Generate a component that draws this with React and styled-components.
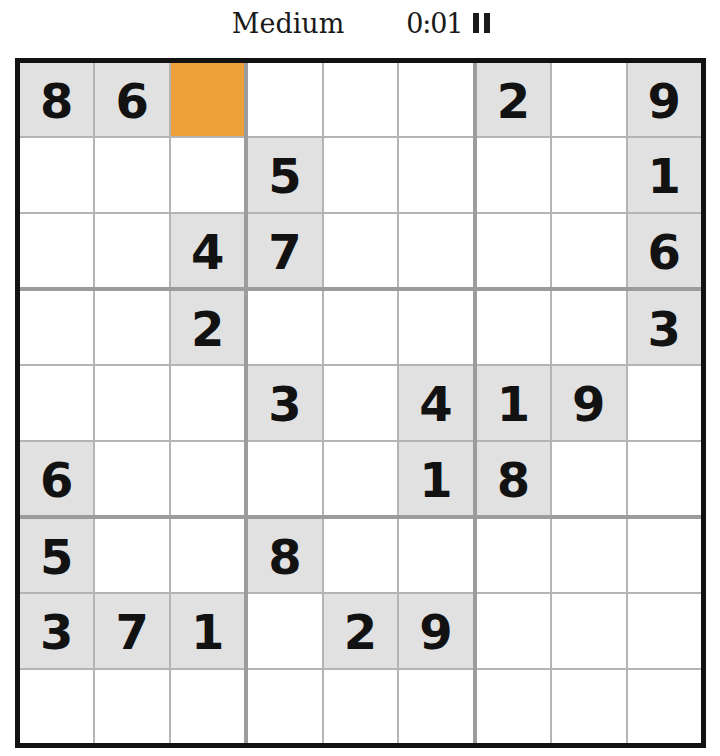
import React from "react";
import styled, { createGlobalStyle } from "styled-components";

const Global = createGlobalStyle`
  html, body { margin: 0; padding: 0; background: #ffffff; }
  #root { width: 720px; }
`;

const Page = styled.div`
  width: 720px;
  display: flex;
  flex-direction: column;
`;

const Header = styled.div`
  height: 58px;
  display: flex;
  align-items: center;
  justify-content: center;
  gap: 62px;
  padding-left: 2px;
  box-sizing: border-box;
  font-family: "DejaVu Serif", "Liberation Serif", serif;
  font-size: 27px;
  color: #1a1a1a;
`;

const Level = styled.span`
  line-height: 1;
  margin-top: -12px;
`;

const Timer = styled.div`
  display: flex;
  align-items: center;
  gap: 11px;
  margin-top: -12px;
  line-height: 1;
  letter-spacing: -1.2px;
`;

const Pause = styled.span`
  display: flex;
  gap: 5px;
  &::before, &::after {
    content: "";
    width: 6px;
    height: 20px;
    background: #1a1a1a;
    display: block;
  }
`;

const Board = styled.div`
  margin-left: 15px;
  width: 691px;
  height: 690px;
  box-sizing: border-box;
  border: 5px solid #121212;
  background: #9c9c9c;
  display: grid;
  grid-template-columns: repeat(3, 1fr);
  grid-template-rows: repeat(3, 1fr);
  gap: 4px;
`;

const Block = styled.div`
  display: grid;
  grid-template-columns: repeat(3, 1fr);
  grid-template-rows: repeat(3, 1fr);
  gap: 2px;
  background: #b4b4b4;
`;

const Cell = styled.div`
  display: flex;
  align-items: center;
  justify-content: center;
  background: ${(p) => (p.$selected ? "#eea13a" : p.$given ? "#e1e1e1" : "#ffffff")};
  font-family: "DejaVu Sans", "Liberation Sans", sans-serif;
  font-weight: 700;
  font-size: 48px;
  color: #121212;
  padding-top: 3px;
  box-sizing: border-box;
`;

const puzzle = [
  "86.___2_9",
  "___5____1",
  "__47____6",
  "__2_____3",
  "___3_419_",
  "6____18__",
  "5__8_____",
  "371_29___",
  "_________",
];

export default function App() {
  const blocks = [];
  for (let br = 0; br < 3; br++) {
    for (let bc = 0; bc < 3; bc++) {
      const cells = [];
      for (let r = 0; r < 3; r++) {
        for (let c = 0; c < 3; c++) {
          const ch = puzzle[br * 3 + r][bc * 3 + c];
          const selected = ch === ".";
          const given = /[1-9]/.test(ch);
          cells.push(
            <Cell key={`${r}-${c}`} $selected={selected} $given={given}>
              {given ? ch : ""}
            </Cell>
          );
        }
      }
      blocks.push(<Block key={`${br}-${bc}`}>{cells}</Block>);
    }
  }
  return (
    <Page>
      <Global />
      <Header>
        <Level>Medium</Level>
        <Timer>
          <span>0:01</span>
          <Pause />
        </Timer>
      </Header>
      <Board>{blocks}</Board>
    </Page>
  );
}
